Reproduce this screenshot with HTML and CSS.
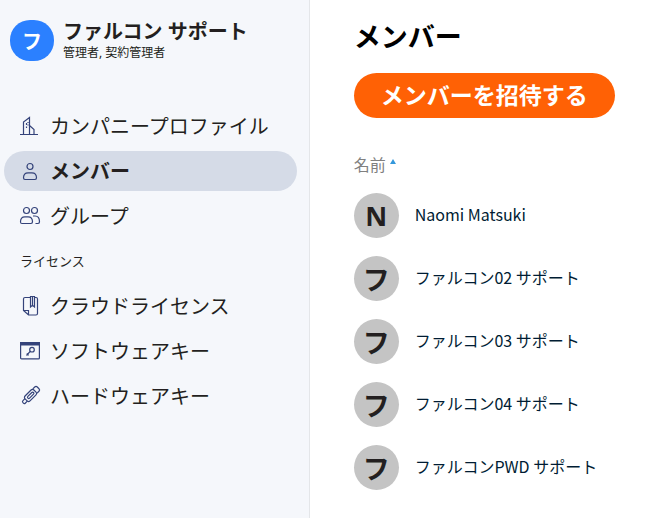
FILE: index.html
```html
<!DOCTYPE html>
<html lang="ja">
<head>
<meta charset="utf-8">
<title>メンバー</title>
<link rel="stylesheet" href="styles.css">
</head>
<body>
<div class="app">
  <aside class="sidebar">
    <div class="profile">
      <span class="profile-avatar">フ</span>
      <div class="profile-text">
        <div class="profile-name">ファルコン サポート</div>
        <div class="profile-role">管理者, 契約管理者</div>
      </div>
    </div>
    <nav class="nav">
      <a class="nav-item" href="#company">
        <svg class="icon" viewBox="0 0 20 20"><path d="M0 18.500h18M3.500 18V6L9.500 1.500V18M9.500 9.500l4.500 4V18M6.500 7v2M6.500 10.500v1.500M8 6v1M8 8.500v1"/></svg>
        カンパニープロファイル
      </a>
      <a class="nav-item active" href="#members" aria-current="page">
        <svg class="icon" viewBox="0 0 20 20"><circle cx="10" cy="5.500" r="3"/><path d="M3.500 16.800c0-3 2-5 4.600-5h3.800c2.600 0 4.600 2 4.600 5 0 1-.5 1.700-1.500 1.700H5c-1 0-1.500-.7-1.500-1.700z"/></svg>
        メンバー
      </a>
      <a class="nav-item" href="#groups">
        <svg class="icon" viewBox="0 0 20 20"><circle cx="6.500" cy="4.500" r="3"/><circle cx="14.500" cy="4.500" r="3"/><path d="M.5 15.800c0-3 1.900-5 4.400-5h3.200c2.500 0 4.400 2 4.400 5 0 1.100-.5 1.700-1.500 1.700H2c-1 0-1.500-.6-1.500-1.700zM13 10h2c2.600 0 4.500 2.300 4.500 5.800 0 1.100-.5 1.700-1.500 1.700h-2.500"/></svg>
        グループ
      </a>
      <h2 class="nav-heading">ライセンス</h2>
      <a class="nav-item" href="#cloud">
        <svg class="icon" viewBox="0 0 20 20"><path d="M10.500 1.500H5c-.9 0-1.500.6-1.500 1.500v11.500l5 4.500H16c.9 0 1.500-.6 1.500-1.500V3c0-.9-.6-1.500-1.500-1.500h-1.500M10.500 .5h4v10.500l-2-1.800-2 1.800zM12.500 1v8M3.500 14.500h5V19"/></svg>
        クラウドライセンス
      </a>
      <a class="nav-item" href="#software">
        <svg class="icon" viewBox="0 0 20 20"><rect x=".6" y="1.600" width="18.800" height="16.300" rx="1"/><path class="solid" d="M0 1h20v3.500H0z"/><circle cx="12" cy="8.700" r="2.300"/><path d="M10.200 10.400L6.500 14.500M6.800 12.500l1.800 1.800"/></svg>
        ソフトウェアキー
      </a>
      <a class="nav-item" href="#hardware">
        <svg class="icon" viewBox="0 0 20 20"><g transform="rotate(45 10 10)"><rect x="6.500" y="3" width="7" height="12.500" rx="2"/><path d="M7 3V.3c0-1 .8-1.800 1.800-1.800h2.400c1 0 1.800.8 1.800 1.800V3M8.300 15.500v3c0 .8.6 1.200 1.700 1.200s1.700-.4 1.700-1.200v-3"/><rect x="8.800" y="5" width="2.400" height="8" rx="1.200"/></g></svg>
        ハードウェアキー
      </a>
    </nav>
  </aside>
  <main class="main">
    <h1 class="title">メンバー</h1>
    <button class="invite" type="button">メンバーを招待する</button>
    <table class="members">
      <thead>
        <tr><th colspan="2" scope="col" aria-sort="ascending"><button class="sort" type="button">名前<span class="sort-arrow"></span></button></th></tr>
      </thead>
      <tbody>
        <tr><td class="avatar-cell"><span class="avatar">N</span></td><td class="name-cell">Naomi Matsuki</td></tr>
        <tr><td class="avatar-cell"><span class="avatar">フ</span></td><td class="name-cell">ファルコン02 サポート</td></tr>
        <tr><td class="avatar-cell"><span class="avatar">フ</span></td><td class="name-cell">ファルコン03 サポート</td></tr>
        <tr><td class="avatar-cell"><span class="avatar">フ</span></td><td class="name-cell">ファルコン04 サポート</td></tr>
        <tr><td class="avatar-cell"><span class="avatar">フ</span></td><td class="name-cell">ファルコンPWD サポート</td></tr>
      </tbody>
    </table>
  </main>
</div>
</body>
</html>
```
FILE: styles.css
```css
* { box-sizing: border-box; }

body {
  margin: 0;
  background: #fff;
  color: #231f20;
  font-family: "Noto Sans", "Noto Sans CJK JP", sans-serif;
}

.app {
  display: flex;
  min-height: 100vh;
}

.sidebar {
  flex: 0 0 47%;
  padding: 20px 12px 0 4px;
  background: #f5f7fb;
  border-right: 1px solid #e4e6e9;
}

.profile {
  display: flex;
  align-items: center;
  gap: 9px;
  height: 41px;
  padding-left: 6px;
}

.profile-avatar {
  display: flex;
  align-items: center;
  justify-content: center;
  width: 44px;
  height: 41px;
  border-radius: 20px;
  background: #2b80ff;
  color: #fff;
  font-size: 20px;
  font-weight: 700;
}

.profile-name {
  font-size: 20px;
  font-weight: 700;
  line-height: 24px;
}

.profile-role {
  font-size: 12px;
  line-height: 18px;
}

.nav {
  display: flex;
  flex-direction: column;
  gap: 5px;
  margin-top: 45px;
}

.nav-item {
  display: flex;
  align-items: center;
  gap: 10px;
  height: 40px;
  padding: 0 0 1px 16px;
  border-radius: 20px;
  color: inherit;
  font-size: 20px;
  text-decoration: none;
  white-space: nowrap;
}

.nav-item.active {
  background: #d5dbe7;
  font-weight: 700;
}

.nav-heading {
  margin: 0;
  padding-left: 16px;
  font-size: 13px;
  font-weight: 400;
  line-height: 40px;
}

.icon {
  width: 20px;
  height: 20px;
  fill: none;
  stroke: #34437a;
  stroke-width: 1.2;
  overflow: visible;
}

.icon .solid {
  fill: #34437a;
  stroke: none;
}

.main {
  flex: 1;
  padding: 17px 44px 0;
}

.title {
  margin: 0 0 16px;
  color: #000;
  font-size: 27px;
  font-weight: 700;
  line-height: 40px;
}

.invite {
  display: block;
  width: 100%;
  height: 45px;
  padding: 0 0 4px;
  border: 0;
  border-radius: 23px;
  background: #ff6105;
  color: #fff;
  font: inherit;
  font-size: 23px;
  font-weight: 700;
}

.members {
  width: 100%;
  margin-top: 34px;
  border-collapse: collapse;
  color: #001c33;
}

.members th {
  padding: 0 0 8px;
  text-align: left;
}

.members td {
  height: 63px;
  padding: 0;
}

.members .name-cell {
  padding-bottom: 3px;
  font-family: "Noto Sans CJK JP", sans-serif;
  font-size: 16px;
}

.sort {
  display: flex;
  align-items: center;
  gap: 4px;
  height: 24px;
  padding: 0;
  border: 0;
  background: none;
  color: #808080;
  font: inherit;
  font-size: 16px;
  font-weight: 400;
}

.sort-arrow {
  margin-bottom: 6px;
  border: 3px solid transparent;
  border-top: 0;
  border-bottom: 5px solid #3498db;
}

.members .avatar-cell {
  width: 61px;
}

.avatar {
  display: flex;
  align-items: center;
  justify-content: center;
  width: 45px;
  height: 45px;
  border-radius: 50%;
  background: #c4c4c4;
  color: #231f20;
  font-size: 27px;
  font-weight: 700;
}
```
